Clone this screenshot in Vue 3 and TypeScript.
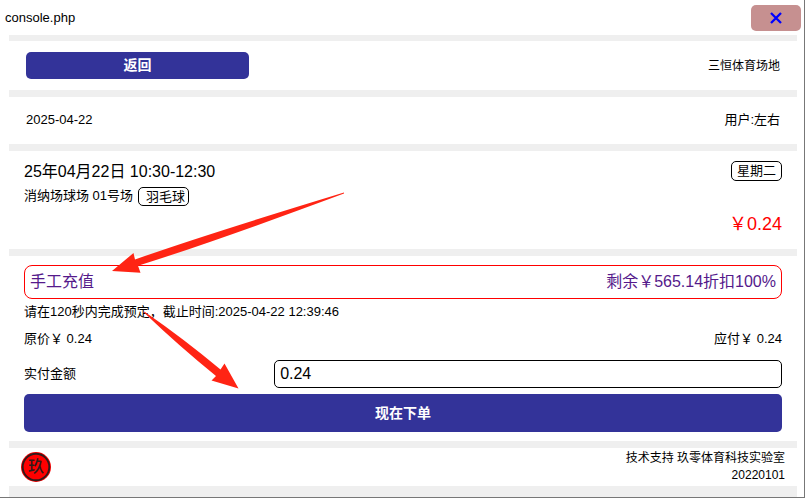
<script setup lang="ts">
import { ref } from 'vue'

const booking = {
  venue: '三恒体育场地',
  date: '2025-04-22',
  user: '左右',
  slot: '25年04月22日 10:30-12:30',
  court: '消纳场球场 01号场',
  sport: '羽毛球',
  weekday: '星期二',
  price: '0.24',
  deadline: '2025-04-22 12:39:46',
}
const amount = ref(booking.price)
</script>

<template>
  <div class="window">
    <header class="titlebar">
      <span>console.php</span>
      <button type="button" class="close" aria-label="关闭">
        <svg viewBox="0 0 12 12" width="12" height="12" aria-hidden="true">
          <path d="M1 1 L11 11 M11 1 L1 11" />
        </svg>
      </button>
    </header>

    <main class="sheet">
      <section class="panel top">
        <button type="button" class="primary back">返回</button>
        <span class="small">{{ booking.venue }}</span>
      </section>

      <section class="panel info">
        <span>{{ booking.date }}</span>
        <span>用户:{{ booking.user }}</span>
      </section>

      <section class="panel slot">
        <div class="row">
          <span class="large">{{ booking.slot }}</span>
          <span class="tag">{{ booking.weekday }}</span>
        </div>
        <div class="court">
          <span>{{ booking.court }}</span>
          <span class="tag sport">{{ booking.sport }}</span>
        </div>
        <div class="price">￥{{ booking.price }}</div>
      </section>

      <form class="panel order" @submit.prevent>
        <a href="#recharge" class="recharge">
          <span>手工充值</span>
          <span>剩余￥565.14折扣100%</span>
        </a>
        <p class="notice">请在120秒内完成预定，截止时间:{{ booking.deadline }}</p>
        <div class="row totals">
          <span>原价￥ {{ booking.price }}</span>
          <span>应付￥ {{ booking.price }}</span>
        </div>
        <div class="field">
          <label for="amount">实付金额</label>
          <input id="amount" v-model="amount" type="text" />
        </div>
        <button type="submit" class="primary submit">现在下单</button>
      </form>

      <footer class="panel footer">
        <svg class="logo" viewBox="0 0 30 30" width="30" height="30" role="img" aria-label="玖">
          <circle cx="15" cy="15" r="15" fill="#f00" />
          <circle cx="15" cy="15" r="13.3" fill="none" stroke="#321a1a" stroke-width="1.9" />
          <text x="15" y="20" text-anchor="middle">玖</text>
        </svg>
        <div class="credits">
          <div>技术支持 玖零体育科技实验室</div>
          <div>20220101</div>
        </div>
      </footer>
    </main>

    <svg class="arrows" viewBox="0 0 240 200" width="240" height="200" aria-hidden="true">
      <path d="M1 81 L22.500 63 L24 69.500 Q90 46 233 2.500 L233 3.500 Q100 53 27 75.700 L29.500 82.700 Z" />
      <path d="M32 121.500 L34 122 Q73 149 109.500 179.500 L113.500 173.500 L127.500 198.500 L100.500 190.500 L105 186 Q68 156 34 123.500 Z" />
    </svg>
  </div>
</template>

<style>
body {
  margin: 0;
  background: #fff;
}
#app {
  display: flex;
  min-height: 100vh;
}
</style>

<style scoped>
* {
  box-sizing: border-box;
}
.window {
  position: relative;
  flex: 1;
  display: flex;
  flex-direction: column;
  border: solid #777;
  border-width: 0 1px 1px 0;
  font: 13px/20px 'Liberation Sans', 'Noto Sans CJK SC', sans-serif;
  color: #000;
}
.titlebar {
  display: flex;
  align-items: center;
  justify-content: space-between;
  height: 35px;
  padding: 0 3px 0 5px;
}
.close {
  display: flex;
  align-items: center;
  justify-content: center;
  width: 50px;
  height: 26px;
  padding: 0;
  border: 0;
  border-radius: 5px;
  background: #c69090;
}
.close path {
  stroke: #00f;
  stroke-width: 2.3;
  fill: none;
}
.sheet {
  flex: 1;
  display: flex;
  flex-direction: column;
  gap: 7px;
  margin: 0 7px 0 9px;
  padding-top: 6px;
  background: #efefef;
}
.panel {
  background: #fff;
}
.top,
.info {
  display: flex;
  align-items: center;
  justify-content: space-between;
  padding: 11px 17px;
}
.info {
  padding: 13px 17px 14px;
}
.small {
  font-size: 12px;
}
.large {
  font-size: 16px;
  line-height: 22px;
}
.primary {
  border: 0;
  border-radius: 5px;
  background: #339;
  color: #fff;
  font: bold 14px/20px 'Liberation Sans', 'Noto Sans CJK SC', sans-serif;
}
.back {
  width: 29.6%;
  height: 27px;
  padding: 0 0 2px;
}
.slot {
  padding: 10px 15px 12px;
}
.row {
  display: flex;
  align-items: flex-start;
  justify-content: space-between;
}
.tag {
  padding: 0 5px;
  border: 1px solid #000;
  border-radius: 5px;
  line-height: 18px;
}
.court {
  display: flex;
  align-items: center;
  gap: 5px;
  margin-top: 3px;
}
.sport {
  padding: 0 3px 0 7px;
  line-height: 17px;
}
.price {
  margin-top: 6px;
  padding-bottom: 1px;
  font-size: 18px;
  line-height: 24px;
  text-align: right;
  color: #f00;
}
.order {
  display: flex;
  flex-direction: column;
  padding: 9px 15px;
}
.recharge {
  display: flex;
  align-items: center;
  justify-content: space-between;
  height: 34px;
  padding: 0 5px;
  border: 1px solid #f00;
  border-radius: 8px;
  font-size: 16px;
  color: #551a8b;
  text-decoration: none;
}
.notice {
  margin: 3px 0 0;
}
.totals {
  margin-top: 7px;
}
.field {
  display: grid;
  grid-template-columns: 33% 67%;
  align-items: center;
  margin-top: 11px;
}
.field input {
  width: 100%;
  height: 28px;
  padding: 0 5px;
  border: 1px solid #000;
  border-radius: 5px;
  background: #fff;
  color: #000;
  font: 16px 'Liberation Sans', sans-serif;
}
.submit {
  height: 38px;
  margin-top: 6px;
}
.footer {
  display: flex;
  align-items: center;
  justify-content: space-between;
  padding: 2px 12px;
}
.logo text {
  font: 500 16px 'Noto Sans CJK SC', sans-serif;
  fill: #321a1a;
}
.credits {
  font-size: 12px;
  line-height: 17px;
  text-align: right;
}
.arrows {
  position: absolute;
  left: 111px;
  top: 190px;
  fill: #ff2414;
  pointer-events: none;
}
</style>
